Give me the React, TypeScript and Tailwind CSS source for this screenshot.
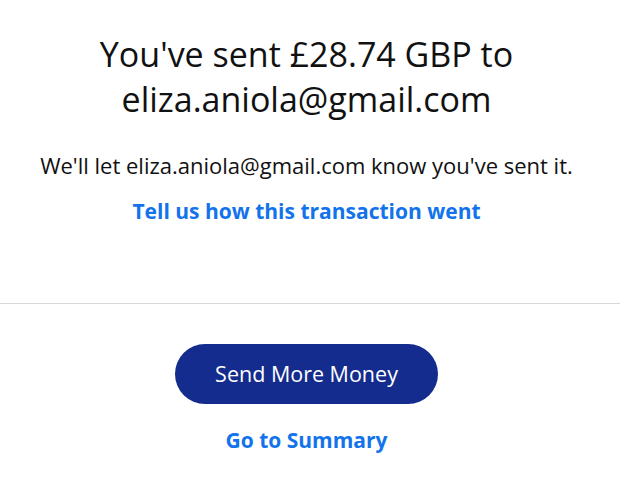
import React from "react";

const App = () => {
  return (
    <div className="w-[620px] h-[492px] bg-white flex flex-col font-['Open_Sans',_sans-serif] text-[#111111]">
      {/* Confirmation */}
      <div className="flex flex-col items-center pt-[32px] w-[613px]">
        <h1 className="text-[34px] leading-[45px] font-normal text-center">
          You've sent £28.74 GBP to
          <br />
          eliza.aniola@gmail.com
        </h1>
        <p className="mt-[29px] text-[22px] leading-[28px] text-center">
          We'll let eliza.aniola@gmail.com know you've sent it.
        </p>
        <a className="mt-[18px] text-[21px] leading-[28px] font-bold text-[#1273eb] cursor-pointer">
          Tell us how this transaction went
        </a>
      </div>

      <div className="w-full border-t border-[#dbd8d3] mt-[78px]" />

      {/* Actions */}
      <div className="flex flex-col items-center pt-[40px] w-[613px]">
        <button className="w-[263px] h-[60px] rounded-full bg-[#142c8e] text-white text-[21.5px] font-medium">
          Send More Money
        </button>
        <a className="mt-[22px] text-[21px] leading-[28px] font-bold text-[#1273eb] cursor-pointer">
          Go to Summary
        </a>
      </div>
    </div>
  );
};

export default App;
